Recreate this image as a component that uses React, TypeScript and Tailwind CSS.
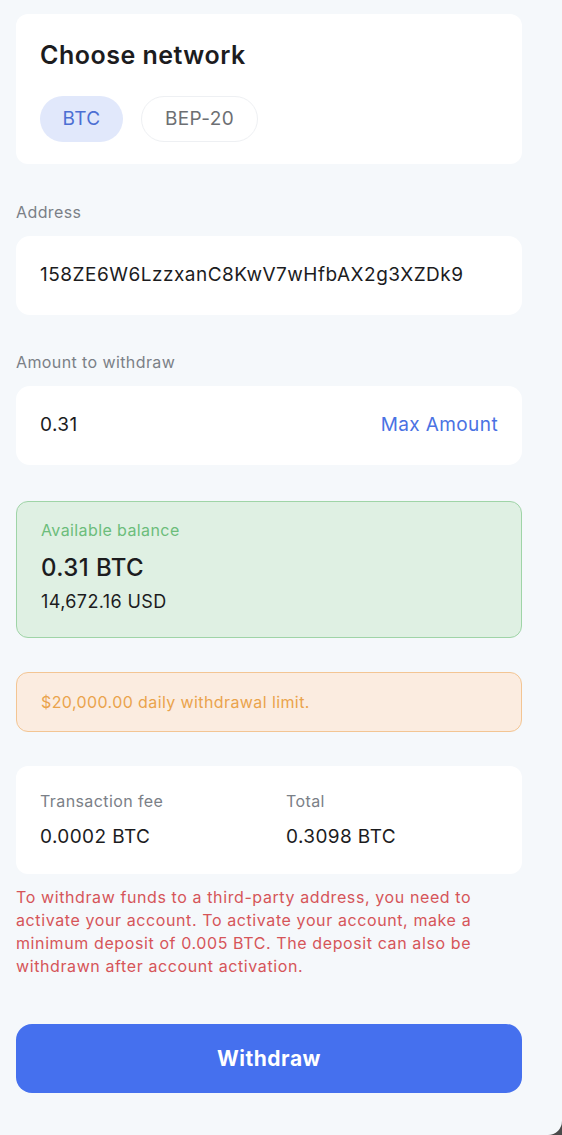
import React from "react";

export default function App() {
  return (
    <div className="w-[562px] h-[1135px] bg-[#4a4a4a]">
      <div
        className="w-full h-full bg-[#f5f8fb] rounded-br-[14px] px-4 pt-[14px] flex flex-col text-[#1c1c1e] tracking-[0.4px]"
        style={{ fontFamily: "Inter, 'Noto Sans', sans-serif" }}
      >
        <div className="w-[506px] bg-white rounded-[12px] px-6 pt-[25px] pb-[22px]">
          <div className="text-[25px] font-semibold leading-[32px] tracking-[0.5px] text-[#1c1c1e]">Choose network</div>
          <div className="flex gap-[18px] mt-[25px]">
            <div className="h-[46px] w-[83px] rounded-full bg-[#e1e8fb] text-[#4c6fd3] text-[19px] flex items-center justify-center">BTC</div>
            <div className="h-[46px] w-[117px] rounded-full border border-[#eef0f3] text-[#6d6f73] text-[19px] flex items-center justify-center">BEP-20</div>
          </div>
        </div>

        <div className="mt-[38px] text-[16px] leading-[20px] text-[#7b8087]">Address</div>
        <div className="mt-[14px] w-[506px] h-[79px] bg-white rounded-[14px] px-6 flex items-center text-[19px] tracking-[0.5px] text-[#1c1c1e]">
          158ZE6W6LzzxanC8KwV7wHfbAX2g3XZDk9
        </div>

        <div className="mt-[37px] text-[16px] leading-[20px] text-[#7b8087]">Amount to withdraw</div>
        <div className="mt-[14px] w-[506px] h-[79px] bg-white rounded-[14px] px-6 flex items-center justify-between text-[19px]">
          <span className="text-[#1c1c1e]">0.31</span>
          <span className="text-[#4a72e3]">Max Amount</span>
        </div>

        <div className="mt-[36px] w-[506px] h-[137px] bg-[#dff0e3] border border-[#9fd4a7] rounded-[12px] px-6 pt-[18px]">
          <div className="text-[16px] leading-[20px] text-[#6cbd7b]">Available balance</div>
          <div className="mt-[13px] text-[24px] leading-[30px] font-medium text-[#1c1c1e]">0.31 BTC</div>
          <div className="mt-[7px] text-[18px] leading-[24px] text-[#1c1c1e]">14,672.16 USD</div>
        </div>

        <div className="mt-[34px] w-[506px] h-[60px] bg-[#fbece0] border border-[#f3c593] rounded-[12px] px-6 flex items-center text-[16px] text-[#eaa34c]">
          $20,000.00 daily withdrawal limit.
        </div>

        <div className="mt-[34px] w-[506px] h-[108px] bg-white rounded-[12px] px-6 pt-[25px] grid grid-cols-[246px_1fr]">
          <div>
            <div className="text-[16px] leading-[20px] text-[#7b8087]">Transaction fee</div>
            <div className="mt-[14px] text-[19px] leading-[24px] text-[#1c1c1e]">0.0002 BTC</div>
          </div>
          <div>
            <div className="text-[16px] leading-[20px] text-[#7b8087]">Total</div>
            <div className="mt-[14px] text-[19px] leading-[24px] text-[#1c1c1e]">0.3098 BTC</div>
          </div>
        </div>

        <div className="mt-[12px] w-[476px] text-[16px] leading-[23px] tracking-[0.6px] text-[#d65559]">
          To withdraw funds to a third-party address, you need to activate your account. To activate your account, make a minimum deposit of 0.005 BTC. The deposit can also be withdrawn after account activation.
        </div>

        <button className="mt-[46px] w-[506px] h-[69px] bg-[#4570ee] rounded-[16px] text-white text-[21px] font-bold tracking-[0.5px]">
          Withdraw
        </button>
      </div>
    </div>
  );
}
